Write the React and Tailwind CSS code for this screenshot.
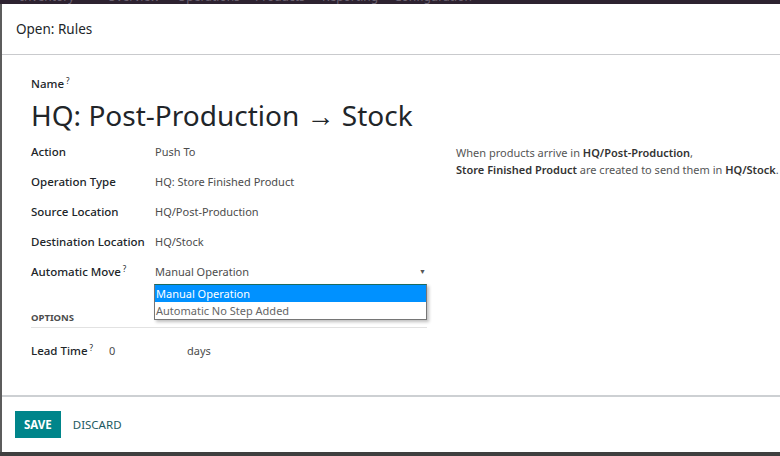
import React from 'react';

function Help() {
  return <sup className="ml-[2px] text-[8px] font-normal text-[#212529]">?</sup>;
}

function Row({ label, help, children }) {
  return (
    <div className="flex items-center h-[30px]">
      <div className="w-[124px] shrink-0 text-[11.5px] font-medium text-[#212529]">
        {label}
        {help && <Help />}
      </div>
      <div className="flex-1 text-[11px] text-[#4c4c4c]">{children}</div>
    </div>
  );
}

export default function App() {
  return (
    <div className="w-[780px] h-[456px] overflow-hidden bg-[#4a4a4a] flex flex-col font-['Noto_Sans',sans-serif]">
      {/* navbar behind the backdrop */}
      <div className="h-[4px] shrink-0 bg-[#2d2230] overflow-hidden">
        <div className="-mt-[11px] flex pl-[20px] text-[12px] text-[#6b6170] leading-[15px] whitespace-nowrap">
          <span className="w-[87px] shrink-0">Inventory</span>
          <span className="w-[70px] shrink-0">Overview</span>
          <span className="w-[78px] shrink-0">Operations</span>
          <span className="w-[67px] shrink-0">Products</span>
          <span className="w-[72px] shrink-0">Reporting</span>
          <span className="shrink-0">Configuration</span>
        </div>
      </div>

      <div className="flex h-[448px] shrink-0">
        <div className="w-[2px] shrink-0 bg-[#5c5c5c]" />
        <div className="w-[800px] shrink-0 bg-white flex flex-col">
          {/* header */}
          <div className="h-[51px] shrink-0 flex items-center px-[14px] border-b border-[#c9cacd]">
            <h4 className="text-[13.5px] text-[#212529]">Open: Rules</h4>
          </div>

          {/* body */}
          <div className="flex-1 px-[29px] pt-[21px]">
            <div className="text-[11.5px] font-medium text-[#212529] leading-[16px]">
              Name
              <Help />
            </div>
            <h1 className="mt-[5px] text-[28px] leading-[36px] text-[#212529]">
              HQ: Post-Production → Stock
            </h1>

            <div className="flex mt-[4px]">
              <div className="w-[396px] shrink-0">
                <Row label="Action">Push To</Row>
                <Row label="Operation Type">HQ: Store Finished Product</Row>
                <Row label="Source Location">HQ/Post-Production</Row>
                <Row label="Destination Location">HQ/Stock</Row>
                <div className="relative">
                  <Row label="Automatic Move" help>
                    <div className="flex items-center justify-between pr-[1px]">
                      <span>Manual Operation</span>
                      <span className="text-[7px] text-[#555]">▼</span>
                    </div>
                  </Row>
                  {/* open dropdown list */}
                  <div className="absolute left-[123px] top-[27px] w-[273px] bg-white border border-[#767676] border-t-[#1c6b5f] shadow-[2px_2px_3px_rgba(0,0,0,0.25)] text-[11px] leading-[17px] z-10">
                    <div className="px-[1px] bg-[#0091ff] text-white">Manual Operation</div>
                    <div className="px-[1px] text-[#666]">Automatic No Step Added</div>
                  </div>
                </div>

                <div className="mt-[24px] pb-[3px] border-b border-[#e2e2e2] text-[9.5px] leading-[13px] font-bold text-[#4c4c4c]">
                  OPTIONS
                </div>
                <div className="flex items-center h-[30px] mt-[8px]">
                  <div className="w-[78px] shrink-0 text-[11.5px] font-medium text-[#212529]">
                    Lead Time
                    <Help />
                  </div>
                  <div className="w-[78px] text-[11px] text-[#4c4c4c]">0</div>
                  <div className="text-[11px] text-[#4c4c4c]">days</div>
                </div>
              </div>

              <div className="ml-[29px] pt-[7px] text-[11px] leading-[17px] text-[#555] whitespace-nowrap">
                <p>
                  When products arrive in <b className="font-semibold text-[#333]">HQ/Post-Production</b>,
                </p>
                <p>
                  <b className="font-semibold text-[#333]">Store Finished Product</b> are created to send them in{' '}
                  <b className="font-semibold text-[#333]">HQ/Stock</b>.
                </p>
              </div>
            </div>
          </div>

          {/* footer */}
          <div className="h-[57px] shrink-0 border-t-2 border-[#cdd0d3] flex items-center gap-[12px] px-[13px]">
            <button className="h-[27px] px-[9px] bg-[#00858a] text-white text-[11.5px] font-bold">
              SAVE
            </button>
            <button className="text-[11.5px] text-[#1d5a62]">DISCARD</button>
          </div>
        </div>
      </div>
      <div className="h-[4px] bg-[#3f3f3f]" />
    </div>
  );
}
